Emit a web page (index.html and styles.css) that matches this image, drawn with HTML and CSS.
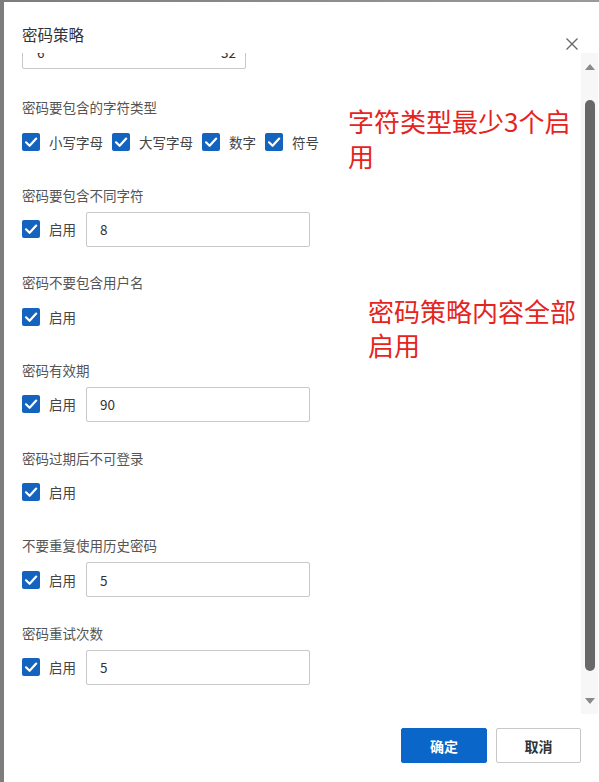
FILE: index.html
```html
<!DOCTYPE html>
<html lang="zh-CN">
<head>
<meta charset="utf-8">
<title>密码策略</title>
<link rel="stylesheet" href="styles.css">
</head>
<body>
<div class="dialog">
  <div class="header">
    <div class="title">密码策略</div>
    <button class="close" aria-label="关闭">
      <svg width="12" height="12" viewBox="0 0 12 12"><path d="M0.5 0.5 L11.5 11.5 M11.5 0.5 L0.5 11.5" stroke="#666" stroke-width="1.3" fill="none"/></svg>
    </button>
  </div>
  <div class="body">
    <div class="scroll">
      <div class="content">
        <div class="range-input"><span>6</span><span>32</span></div>

        <div class="section">
          <div class="label">密码要包含的字符类型</div>
          <div class="row">
            <span class="cb"><svg viewBox="0 0 18 18"><path d="M4 9.3 L7.6 12.8 L14.2 5.6"/></svg></span><span class="opt">小写字母</span>
            <span class="cb"><svg viewBox="0 0 18 18"><path d="M4 9.3 L7.6 12.8 L14.2 5.6"/></svg></span><span class="opt">大写字母</span>
            <span class="cb"><svg viewBox="0 0 18 18"><path d="M4 9.3 L7.6 12.8 L14.2 5.6"/></svg></span><span class="opt">数字</span>
            <span class="cb"><svg viewBox="0 0 18 18"><path d="M4 9.3 L7.6 12.8 L14.2 5.6"/></svg></span><span class="opt">符号</span>
          </div>
        </div>

        <div class="section">
          <div class="label">密码要包含不同字符</div>
          <div class="row">
            <span class="cb"><svg viewBox="0 0 18 18"><path d="M4 9.3 L7.6 12.8 L14.2 5.6"/></svg></span><span class="opt">启用</span>
            <div class="input">8</div>
          </div>
        </div>

        <div class="section">
          <div class="label">密码不要包含用户名</div>
          <div class="row">
            <span class="cb"><svg viewBox="0 0 18 18"><path d="M4 9.3 L7.6 12.8 L14.2 5.6"/></svg></span><span class="opt">启用</span>
          </div>
        </div>

        <div class="section">
          <div class="label">密码有效期</div>
          <div class="row">
            <span class="cb"><svg viewBox="0 0 18 18"><path d="M4 9.3 L7.6 12.8 L14.2 5.6"/></svg></span><span class="opt">启用</span>
            <div class="input">90</div>
          </div>
        </div>

        <div class="section">
          <div class="label">密码过期后不可登录</div>
          <div class="row">
            <span class="cb"><svg viewBox="0 0 18 18"><path d="M4 9.3 L7.6 12.8 L14.2 5.6"/></svg></span><span class="opt">启用</span>
          </div>
        </div>

        <div class="section">
          <div class="label">不要重复使用历史密码</div>
          <div class="row">
            <span class="cb"><svg viewBox="0 0 18 18"><path d="M4 9.3 L7.6 12.8 L14.2 5.6"/></svg></span><span class="opt">启用</span>
            <div class="input">5</div>
          </div>
        </div>

        <div class="section">
          <div class="label">密码重试次数</div>
          <div class="row">
            <span class="cb"><svg viewBox="0 0 18 18"><path d="M4 9.3 L7.6 12.8 L14.2 5.6"/></svg></span><span class="opt">启用</span>
            <div class="input">5</div>
          </div>
        </div>
      </div>
    </div>
    <div class="scrollbar">
      <div class="sb-btn"><span class="tri-up"></span></div>
      <div class="thumb"></div>
      <div class="sb-btn down"><span class="tri-down"></span></div>
    </div>
  </div>
  <div class="footer">
    <button class="btn primary">确定</button>
    <button class="btn">取消</button>
  </div>
</div>
<div class="note note1">字符类型最少3个启用</div>
<div class="note note2">密码策略内容全部启用</div>
</body>
</html>
```

FILE: styles.css
```css
html, body {
  margin: 0;
  padding: 0;
}
body {
  width: 599px;
  height: 782px;
  overflow: hidden;
  background: linear-gradient(to right, #7d7d7d, #9a9a9a);
  font-family: "Noto Sans CJK SC", "Noto Sans", sans-serif;
  color: #333;
}
.dialog {
  margin: 2px 0 0 4px;
  width: 595px;
  height: 780px;
  background: #fff;
  display: flex;
  flex-direction: column;
}
.header {
  position: relative;
  height: 51px;
  flex: none;
}
.title {
  padding: 22px 0 0 18px;
  font-size: 15.5px;
  line-height: 20px;
  color: #333;
}
.close {
  position: absolute;
  left: 562px;
  top: 36px;
  width: 12px;
  height: 12px;
  padding: 0;
  border: 0;
  background: none;
  display: block;
}
.close svg { display: block; }
.body {
  display: flex;
  height: 661px;
  flex: none;
}
.scroll {
  flex: 1;
  overflow: hidden;
}
.content {
  margin-top: -19px;
  padding-left: 18px;
}
.range-input {
  box-sizing: border-box;
  width: 224px;
  height: 35px;
  border: 1px solid #c8c8c8;
  border-radius: 2px;
  display: flex;
  justify-content: space-between;
  align-items: center;
  padding: 0 9px 0 14px;
  font-size: 13.5px;
  color: #333;
  margin-bottom: 28px;
}
.section {
  margin-bottom: 25.67px;
}
.label {
  font-size: 13.5px;
  line-height: 20px;
  color: #555;
  margin-bottom: 7px;
}
.row {
  display: flex;
  align-items: center;
  height: 35px;
}
.cb {
  width: 18px;
  height: 18px;
  border-radius: 2px;
  background: #1463be;
  flex: none;
  display: block;
}
.cb svg {
  width: 18px;
  height: 18px;
  display: block;
}
.cb path {
  fill: none;
  stroke: #fff;
  stroke-width: 2.2;
  stroke-linecap: round;
  stroke-linejoin: round;
}
.opt {
  font-size: 13.5px;
  line-height: 20px;
  color: #444;
  margin: 0 9px 0 9px;
}
.input {
  box-sizing: border-box;
  width: 224px;
  height: 35px;
  border: 1px solid #c8c8c8;
  border-radius: 2px;
  padding-left: 13px;
  margin-left: 1px;
  display: flex;
  align-items: center;
  font-size: 13.5px;
  color: #333;
}
.scrollbar {
  width: 17px;
  flex: none;
  margin-right: 1px;
  background: #f7f7f7;
  display: flex;
  flex-direction: column;
  align-items: center;
}
.sb-btn {
  height: 27px;
  width: 100%;
  display: flex;
  align-items: center;
  justify-content: center;
}
.tri-up {
  width: 0;
  height: 0;
  border-left: 5px solid transparent;
  border-right: 5px solid transparent;
  border-bottom: 6px solid #8a8a8a;
}
.tri-down {
  width: 0;
  height: 0;
  border-left: 5px solid transparent;
  border-right: 5px solid transparent;
  border-top: 6px solid #8a8a8a;
}
.thumb {
  margin-top: 20px;
  width: 10px;
  height: 571px;
  border-radius: 5px;
  background: #686868;
}
.sb-btn.down {
  margin-top: 16px;
}
.footer {
  display: flex;
  justify-content: flex-end;
  gap: 9px;
  padding: 14px 18px 0 0;
}
.btn {
  box-sizing: border-box;
  width: 85px;
  height: 35px;
  border: 1px solid #c8c8c8;
  border-radius: 2px;
  background: #fff;
  font-family: "Noto Sans CJK SC", sans-serif;
  font-size: 14px;
  font-weight: 700;
  color: #333;
  padding: 0;
}
.btn.primary {
  width: 86px;
  background: #0a66c8;
  border-color: #0a66c8;
  color: #fff;
}
.note {
  position: absolute;
  font-size: 26px;
  color: #e5251d;
}
.note1 {
  left: 348px;
  top: 103px;
  width: 235px;
  line-height: 35px;
}
.note2 {
  left: 368px;
  top: 294px;
  width: 215px;
  line-height: 34px;
}
```
